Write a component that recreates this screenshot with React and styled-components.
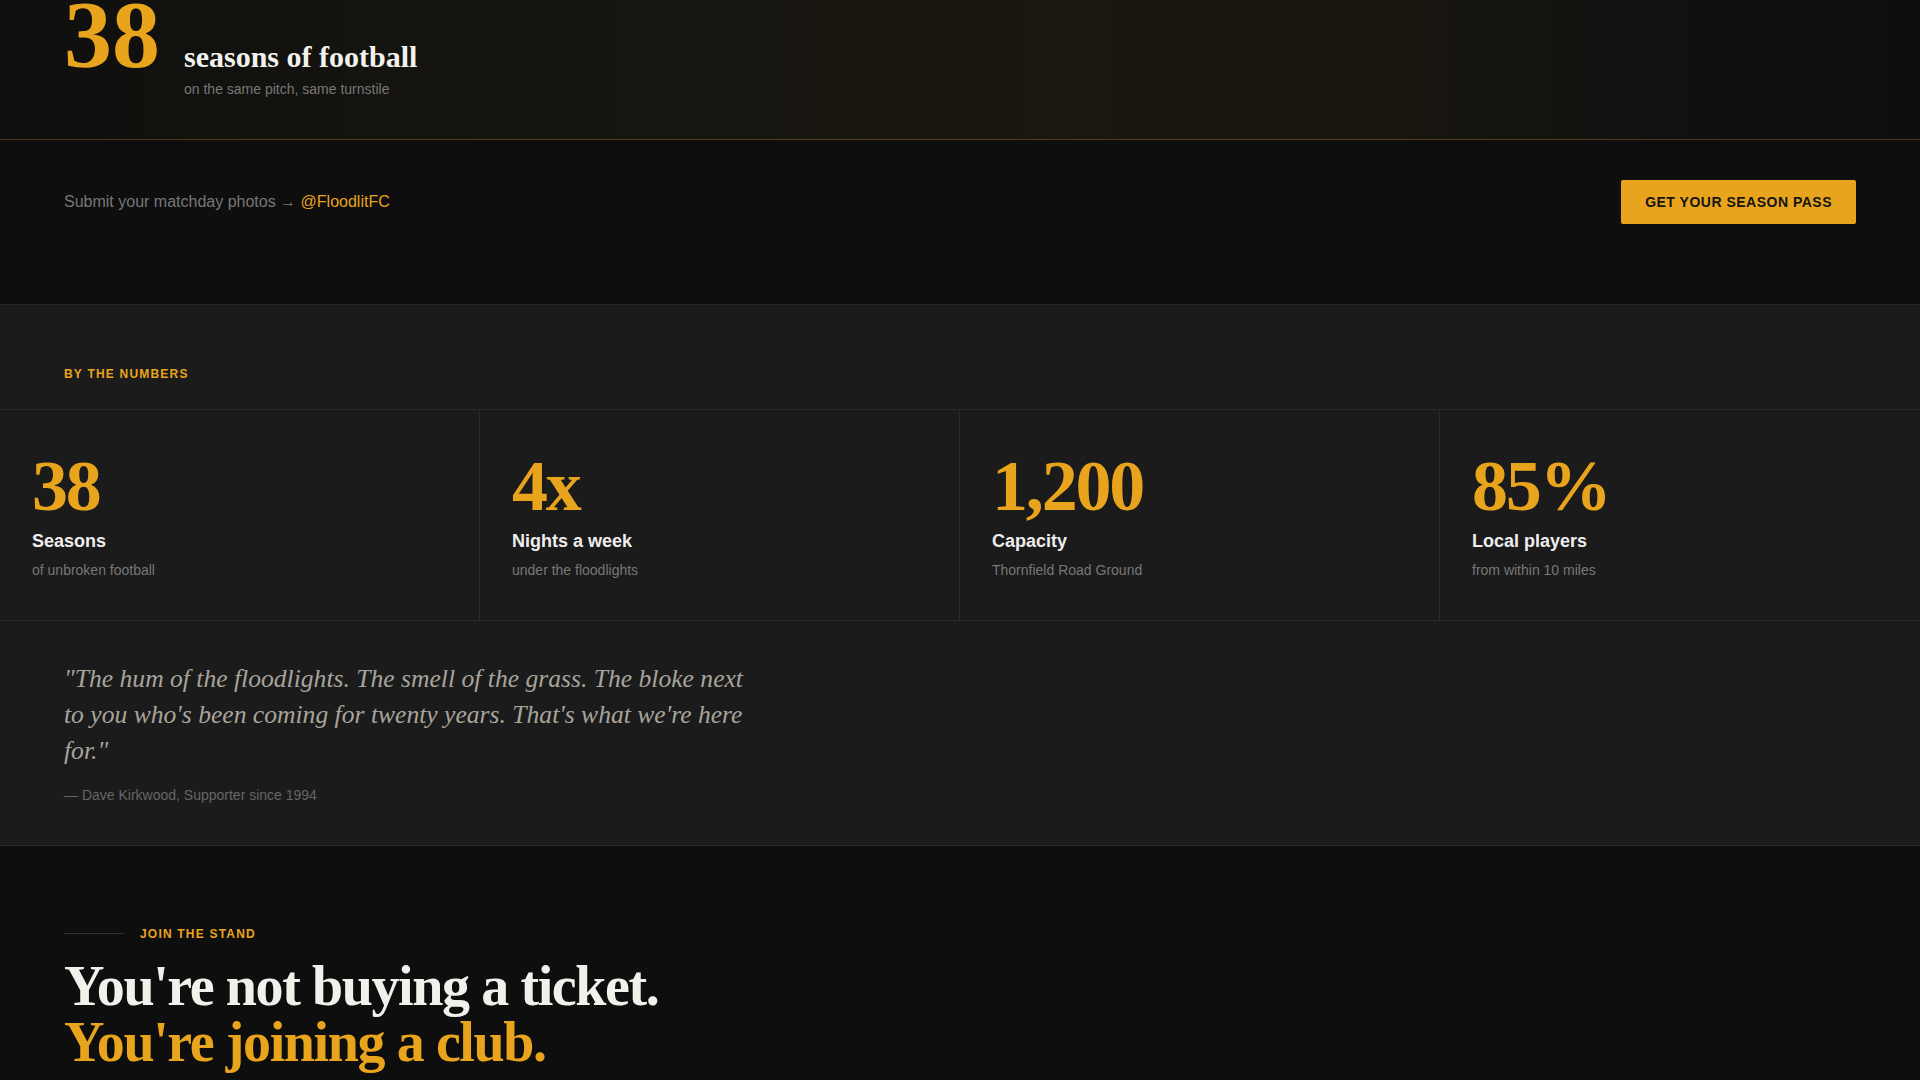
import styled, { createGlobalStyle } from 'styled-components';

const gold = '#e8a41c';
const serif = `'Liberation Serif', 'Times New Roman', serif`;
const sans = `'Liberation Sans', Arial, sans-serif`;

const GlobalStyle = createGlobalStyle`
  * {
    box-sizing: border-box;
  }
  body {
    margin: 0;
    background: #0e0e0e;
    font-family: ${sans};
    color: #eee;
  }
`;

const stats = [
  { value: '38', label: 'Seasons', note: 'of unbroken football' },
  { value: '4x', label: 'Nights a week', note: 'under the floodlights' },
  { value: '1,200', label: 'Capacity', note: 'Thornfield Road Ground' },
  { value: '85%', label: 'Local players', note: 'from within 10 miles' },
];

const App = () => {
  return (
    <>
      <GlobalStyle />
      <Page>
        <HeroBand>
          <HeroRow>
            <HeroNumber>38</HeroNumber>
            <HeroText>
              <HeroTitle>seasons of football</HeroTitle>
              <HeroSub>on the same pitch, same turnstile</HeroSub>
            </HeroText>
          </HeroRow>
        </HeroBand>

        <SubmitBar>
          <SubmitText>
            Submit your matchday photos → <Handle>@FloodlitFC</Handle>
          </SubmitText>
          <PassButton>Get your season pass</PassButton>
        </SubmitBar>

        <NumbersSection>
          <SectionHead>
            <Eyebrow>By the numbers</Eyebrow>
          </SectionHead>
          <StatGrid>
            {stats.map((s) => (
              <StatCell key={s.label}>
                <StatValue>{s.value}</StatValue>
                <StatLabel>{s.label}</StatLabel>
                <StatNote>{s.note}</StatNote>
              </StatCell>
            ))}
          </StatGrid>
          <QuoteBlock>
            <Quote>
              "The hum of the floodlights. The smell of the grass. The bloke next to you who's been
              coming for twenty years. That's what we're here for."
            </Quote>
            <Cite>— Dave Kirkwood, Supporter since 1994</Cite>
          </QuoteBlock>
        </NumbersSection>

        <JoinSection>
          <JoinEyebrow>
            <Rule />
            <Eyebrow>Join the stand</Eyebrow>
          </JoinEyebrow>
          <Headline>
            You're not buying a ticket.
            <br />
            <Accent>You're joining a club.</Accent>
          </Headline>
        </JoinSection>
      </Page>
    </>
  );
};

export default App;

const Page = styled.div`
  min-height: 100vh;
  background: #0e0e0e;
`;

// bottom of the hero: content sits on the band's floor, big number runs off the top
const HeroBand = styled.section`
  height: 140px;
  overflow: hidden;
  display: flex;
  flex-direction: column;
  justify-content: flex-end;
  padding: 0 64px 39px;
  background: linear-gradient(
    90deg,
    #0f0f0e 0%,
    #15140f 25%,
    #1a1710 55%,
    #19160f 72%,
    #111110 85%,
    #0e0e0e 100%
  );
  border-bottom: 1px solid rgba(232, 164, 28, 0.28);
`;

const HeroRow = styled.div`
  display: flex;
  align-items: baseline;
  gap: 24px;
`;

const HeroNumber = styled.div`
  font-family: ${serif};
  font-weight: 700;
  font-size: 96px;
  line-height: 1;
  color: ${gold};
`;

const HeroText = styled.div`
  display: flex;
  flex-direction: column;
`;

const HeroTitle = styled.h2`
  margin: 0;
  font-family: ${serif};
  font-weight: 700;
  font-size: 30px;
  line-height: 1.2;
  color: #f4f2ee;
`;

const HeroSub = styled.p`
  margin: 4px 0 0;
  font-size: 14px;
  line-height: 1.5;
  color: #777;
`;

const SubmitBar = styled.section`
  display: flex;
  align-items: center;
  justify-content: space-between;
  padding: 40px 64px 80px;
  background: #0e0e0e;
`;

const SubmitText = styled.p`
  margin: 0;
  font-size: 16px;
  line-height: 1.5;
  color: #777;
`;

const Handle = styled.a`
  color: ${gold};
  text-decoration: none;
`;

const PassButton = styled.button`
  height: 44px;
  padding: 0 24px;
  border: none;
  border-radius: 2px;
  background: ${gold};
  color: #141414;
  font-family: ${sans};
  font-size: 14px;
  font-weight: 700;
  letter-spacing: 0.5px;
  text-transform: uppercase;
  cursor: pointer;
`;

const NumbersSection = styled.section`
  background: #1b1b1b;
  border-top: 1px solid #252525;
  border-bottom: 1px solid #2a2a2a;
`;

const SectionHead = styled.div`
  padding: 60px 64px 26px;
`;

const Eyebrow = styled.span`
  display: block;
  font-size: 12px;
  line-height: 1.5;
  font-weight: 700;
  letter-spacing: 0.1em;
  text-transform: uppercase;
  color: ${gold};
`;

const StatGrid = styled.div`
  display: grid;
  grid-template-columns: repeat(4, 1fr);
  border-top: 1px solid #2a2a2a;
  border-bottom: 1px solid #2a2a2a;
`;

const StatCell = styled.div`
  padding: 40px 32px 39px;
  border-right: 1px solid #2a2a2a;

  &:last-child {
    border-right: none;
  }
`;

const StatValue = styled.div`
  font-family: ${serif};
  font-weight: 700;
  font-size: 72px;
  line-height: 1;
  letter-spacing: -0.03em;
  color: ${gold};
  margin-bottom: 8px;
`;

const StatLabel = styled.div`
  font-size: 18px;
  font-weight: 700;
  line-height: 1.3;
  color: #eee;
  margin-bottom: 7px;
`;

const StatNote = styled.div`
  font-size: 14px;
  line-height: 1.5;
  color: #777;
`;

const QuoteBlock = styled.div`
  padding: 40px 64px 39px;
`;

const Quote = styled.blockquote`
  margin: 0;
  max-width: 700px;
  font-family: ${serif};
  font-style: italic;
  font-size: 25.6px;
  line-height: 1.4;
  color: #a8a49c;
`;

const Cite = styled.p`
  margin: 16px 0 0;
  font-size: 14px;
  line-height: 1.5;
  color: #666;
`;

const JoinSection = styled.section`
  padding: 79px 64px 40px;
  background: #0e0e0e;
`;

const JoinEyebrow = styled.div`
  display: flex;
  align-items: center;
  gap: 16px;
  margin-bottom: 15px;
`;

const Rule = styled.span`
  width: 60px;
  height: 1px;
  background: #333;
`;

const Headline = styled.h1`
  margin: 0;
  font-family: ${serif};
  font-weight: 700;
  font-size: 56px;
  line-height: 1;
  letter-spacing: -0.025em;
  color: #f2f0eb;
`;

const Accent = styled.span`
  color: ${gold};
`;
